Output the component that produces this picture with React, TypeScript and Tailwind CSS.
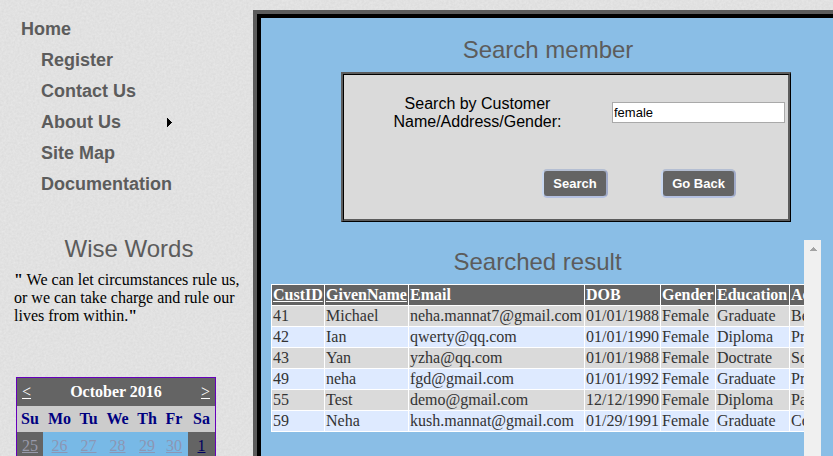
import React from "react";

const menu = ["Register", "Contact Us", "About Us", "Site Map", "Documentation"];
const columns = [
  { name: "CustID", sortable: true },
  { name: "GivenName", sortable: true },
  { name: "Email" },
  { name: "DOB" },
  { name: "Gender" },
  { name: "Education" },
  { name: "Address" },
];
const members = [
  ["41", "Michael", "neha.mannat7@gmail.com", "01/01/1988", "Female", "Graduate", "Be"],
  ["42", "Ian", "qwerty@qq.com", "01/01/1990", "Female", "Diploma", "Pr"],
  ["43", "Yan", "yzha@qq.com", "01/01/1988", "Female", "Doctrate", "So"],
  ["49", "neha", "fgd@gmail.com", "01/01/1992", "Female", "Graduate", "Pr"],
  ["55", "Test", "demo@gmail.com", "12/12/1990", "Female", "Diploma", "Pa"],
  ["59", "Neha", "kush.mannat@gmail.com", "01/29/1991", "Female", "Graduate", "Co"],
];
const weekdays = ["Su", "Mo", "Tu", "We", "Th", "Fr", "Sa"];
const firstWeek = ["25", "26", "27", "28", "29", "30", "1"];
const calendarGrid = "grid grid-cols-[26px_33px_25px_33px_26px_28px_27px] text-center";

function Paper() {
  return (
    <svg className="pointer-events-none absolute inset-0 h-full w-full" aria-hidden="true">
      <filter id="grain" x="0" y="0" width="100%" height="100%" colorInterpolationFilters="sRGB">
        <feTurbulence type="fractalNoise" baseFrequency="0.45" numOctaves="2" />
        <feColorMatrix type="matrix" values="0.06 0 0 0 0.853  0.06 0 0 0 0.853  0.06 0 0 0 0.853  0 0 0 0 1" />
      </filter>
      <rect width="100%" height="100%" filter="url(#grain)" />
    </svg>
  );
}

function Calendar() {
  return (
    <div className="ml-4 mt-[52px] h-[220px] w-[200px] border border-[#6600bb] font-['Liberation_Serif',serif] text-[16px]">
      <div className="flex h-[28px] items-center justify-between bg-[#646464] px-[5px] text-white">
        <a className="underline">&lt;</a>
        <b>October 2016</b>
        <a className="underline">&gt;</a>
      </div>
      <div className={`${calendarGrid} h-[26px] bg-[#cccccc] font-bold leading-[26px] text-[#000080]`}>
        {weekdays.map((d) => <span key={d}>{d}</span>)}
      </div>
      <div className={`${calendarGrid} h-[28px] bg-[#78b9e6] leading-[28px] text-[#8c96b4]`}>
        {firstWeek.map((d, i) => (
          <a
            key={d}
            className={`underline ${i === 0 ? "bg-[#646464] text-[#9999aa]" : ""} ${i === 6 ? "bg-[#646464] text-[#000060]" : ""}`}
          >
            {d}
          </a>
        ))}
      </div>
    </div>
  );
}

function Sidebar() {
  return (
    <aside className="w-[253px] shrink-0">
      <nav className="pt-[14px] font-['Liberation_Sans',sans-serif] text-[18px] font-bold text-[#5c5c5c]">
        <div className="h-[31px] pl-[21px] leading-[31px]">Home</div>
        {menu.map((m) => (
          <div key={m} className="flex h-[31px] w-[173px] items-center justify-between whitespace-nowrap pl-[41px] leading-[31px]">
            {m}
            {m === "About Us" && (
              <svg width="6" height="9" shapeRendering="crispEdges">
                <path d="M0 0L5 4.5L0 9Z" fill="#000" />
              </svg>
            )}
          </div>
        ))}
      </nav>
      <h2 className="mt-[35px] pl-[5px] text-center font-['Liberation_Sans',sans-serif] text-[24px] leading-[28px] text-[#5c5c5c]">
        Wise Words
      </h2>
      <p className="mt-2 whitespace-nowrap pl-[14px] font-['Liberation_Serif',serif] text-[16px] leading-[18px] text-black">
        <b>"</b> We can let circumstances rule us,<br />
        or we can take charge and rule our<br />
        lives from within.<b>"</b>
      </p>
      <Calendar />
    </aside>
  );
}

function SearchPanel() {
  const button =
    "h-[29px] rounded-[5px] border-2 border-t-[#b4bed2] border-l-[#c8d7f0] border-r-[#a0aac8] border-b-[#b4c0e0] bg-[#646464] font-['Liberation_Sans',sans-serif] text-[13px] font-bold leading-[23px] text-white";
  return (
    <div className="ml-20 mt-[8px] h-[150px] w-[450px] border-2 border-b border-r border-[#5c5c5c] border-b-black border-r-black font-['Liberation_Sans',sans-serif]">
      <div className="h-full border border-b-2 border-r-2 border-black border-b-[#5c5c5c] border-r-[#5c5c5c] bg-[#dadada]">
        <div className="flex pt-[20px]">
          <label className="w-[267px] text-center text-[16px] leading-[18px] text-black">
            Search by Customer<br />Name/Address/Gender:
          </label>
          <input
            defaultValue="female"
            className="ml-px mt-[7px] h-[21px] w-[173px] border border-[#a9a9a9] bg-white px-px text-[13px] text-black"
          />
        </div>
        <div className="mt-[38px] flex gap-[53px] pl-[198px]">
          <button className={`${button} w-[66px]`}>Search</button>
          <button className={`${button} w-[75px]`}>Go Back</button>
        </div>
      </div>
    </div>
  );
}

function Results() {
  return (
    <section className="mt-[18px] flex h-[260px] w-[560px]">
      <div className="w-[543px] overflow-hidden pl-[10px]">
        <h2 className="ml-[-10px] pl-[10px] pt-[8px] text-center font-['Liberation_Sans',sans-serif] text-[24px] leading-[28px] text-[#5c5c5c]">
          Searched result
        </h2>
        <table className="mt-[8px] w-[600px] table-fixed border-collapse font-['Liberation_Serif',serif] text-[16px] leading-[18px] text-[#333333]">
          <colgroup>
            <col className="w-[53px]" />
            <col className="w-[84px]" />
            <col className="w-[176px]" />
            <col className="w-[76px]" />
            <col className="w-[55px]" />
            <col className="w-[74px]" />
            <col className="w-[82px]" />
          </colgroup>
          <thead>
            <tr className="bg-[#646464] text-white">
              {columns.map((c) => (
                <th key={c.name} className={`h-[21px] border border-white p-px text-left ${c.sortable ? "underline" : ""}`}>
                  {c.name}
                </th>
              ))}
            </tr>
          </thead>
          <tbody>
            {members.map((row) => (
              <tr key={row[0]} className="bg-[#dadada] even:bg-[#deeaff]">
                {row.map((value, i) => (
                  <td key={i} className="h-[21px] whitespace-nowrap border border-white p-px">{value}</td>
                ))}
              </tr>
            ))}
          </tbody>
        </table>
      </div>
      <div className="flex w-[17px] justify-center bg-[#f0f0f0] pt-[7px]">
        <svg width="8" height="4" shapeRendering="crispEdges">
          <path d="M4 0L8 4H0Z" fill="#a3a3a3" />
        </svg>
      </div>
    </section>
  );
}

export default function App() {
  return (
    <div className="relative h-[456px] w-[833px] overflow-hidden bg-[#e1e1e1]">
      <Paper />
      <div className="relative flex h-full">
        <Sidebar />
        <main className="mt-[10px] h-[500px] grow border-l-4 border-t-4 border-[#5c5c5c]">
          <div className="h-full border-l-4 border-t-4 border-black bg-[#8abee6]">
            <h1 className="pl-[2px] pt-[17px] text-center font-['Liberation_Sans',sans-serif] text-[24px] leading-[29px] text-[#5c5c5c]">
              Search member
            </h1>
            <SearchPanel />
            <Results />
          </div>
        </main>
      </div>
    </div>
  );
}
